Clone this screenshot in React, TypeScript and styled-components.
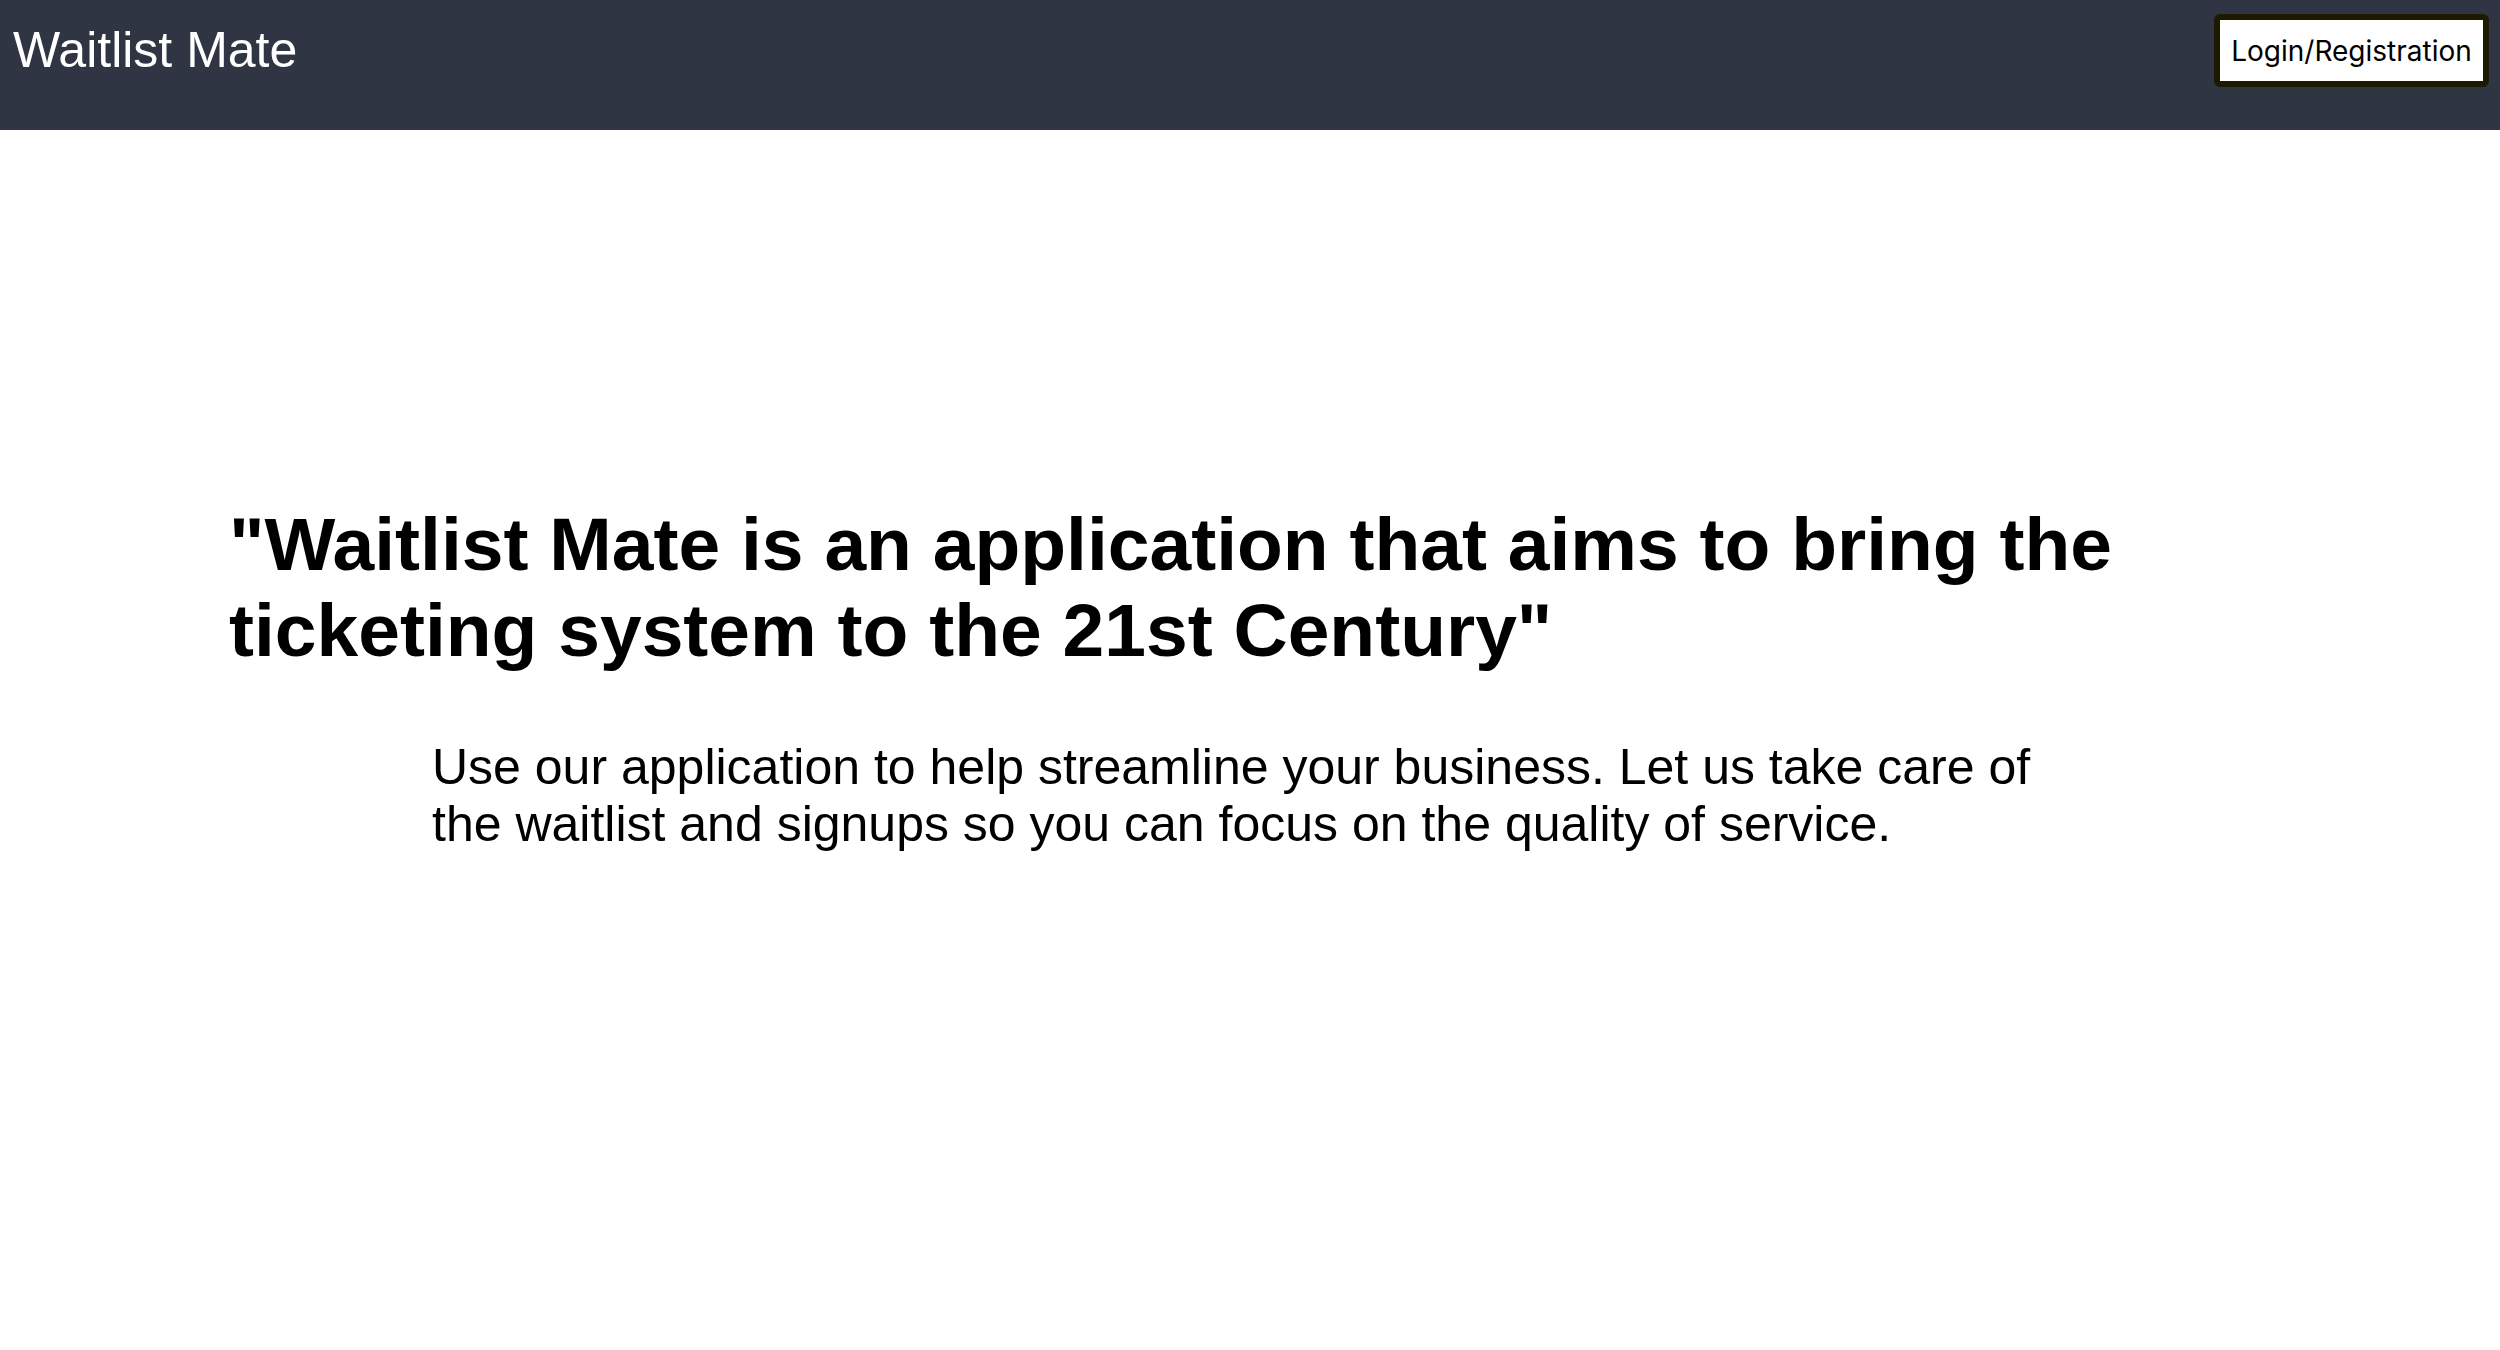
import React from "react";
import styled, { createGlobalStyle } from "styled-components";

const GlobalStyle = createGlobalStyle`
  html, body {
    margin: 0;
    padding: 0;
    background: #ffffff;
    font-family: "Liberation Sans", Arial, sans-serif;
  }
`;

const Page = styled.div`
  display: flex;
  flex-direction: column;
  min-height: 100vh;
`;

const NavBar = styled.header`
  display: flex;
  justify-content: space-between;
  align-items: flex-start;
  height: 130px;
  box-sizing: border-box;
  padding: 14px 11px 0 13px;
  background: #2f3542;
`;

const Brand = styled.h1`
  margin: 0;
  padding-top: 8px;
  font-family: "Liberation Sans", Arial, sans-serif;
  font-weight: 400;
  font-size: 50px;
  line-height: 1.15;
  color: #ffffff;
`;

const LoginButton = styled.button`
  box-sizing: border-box;
  width: 275px;
  height: 73px;
  padding: 0;
  background: #ffffff;
  border: 6px solid #1c1a00;
  border-radius: 6px;
  font-family: Inter, "Noto Sans", sans-serif;
  font-size: 28px;
  color: #000000;
  cursor: pointer;
`;

const Hero = styled.main`
  display: flex;
  flex-direction: column;
  padding: 371px 0 0 229px;
`;

const Tagline = styled.h2`
  margin: 0;
  max-width: 1950px;
  font-family: "Liberation Sans", Arial, sans-serif;
  font-weight: 700;
  font-size: 75px;
  line-height: 86px;
  color: #000000;
`;

const Blurb = styled.p`
  margin: 66px 0 0 203px;
  max-width: 1630px;
  font-family: "Liberation Sans", Arial, sans-serif;
  font-size: 50px;
  line-height: 57px;
  color: #000000;
`;

export default function App() {
  return (
    <Page>
      <GlobalStyle />
      <NavBar>
        <Brand>Waitlist Mate</Brand>
        <LoginButton>Login/Registration</LoginButton>
      </NavBar>
      <Hero>
        <Tagline>
          "Waitlist Mate is an application that aims to bring the ticketing
          system to the 21st Century"
        </Tagline>
        <Blurb>
          Use our application to help streamline your business. Let us take
          care of the waitlist and signups so you can focus on the quality of
          service.
        </Blurb>
      </Hero>
    </Page>
  );
}
